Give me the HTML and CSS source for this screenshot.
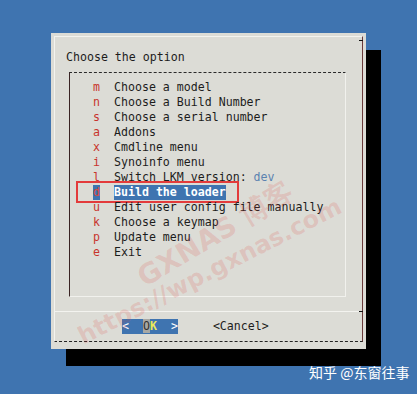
FILE: index.html
```html
<!DOCTYPE html>
<html>
<head>
<meta charset="utf-8">
<link rel="stylesheet" href="styles.css">
</head>
<body>
<div class="screen">
  <div class="dialog">
    <div class="frame">
      <div class="title">Choose the option</div>
      <div class="menu">
        <div class="row"><span class="key">m</span><span class="label">Choose a model</span></div>
        <div class="row"><span class="key">n</span><span class="label">Choose a Build Number</span></div>
        <div class="row"><span class="key">s</span><span class="label">Choose a serial number</span></div>
        <div class="row"><span class="key">a</span><span class="label">Addons</span></div>
        <div class="row"><span class="key">x</span><span class="label">Cmdline menu</span></div>
        <div class="row"><span class="key">i</span><span class="label">Synoinfo menu</span></div>
        <div class="row"><span class="key">l</span><span class="label">Switch LKM version: <span class="dev">dev</span></span></div>
        <div class="row selected"><span class="key">d</span><span class="label">Build the loader</span><span class="mark"></span></div>
        <div class="row"><span class="key">u</span><span class="label">Edit user config file manually</span></div>
        <div class="row"><span class="key">k</span><span class="label">Choose a keymap</span></div>
        <div class="row"><span class="key">p</span><span class="label">Update menu</span></div>
        <div class="row"><span class="key">e</span><span class="label">Exit</span></div>
      </div>
      <div class="sep"></div>
      <div class="buttons">
        <span class="btn active">&lt;  <span class="cur">O</span><span class="hot">K</span>  &gt;</span>
        <span class="btn">&lt;Cancel&gt;</span>
      </div>
    </div>
  </div>
  <div class="wm wm1">GXNAS 博客</div>
  <div class="wm wm2">https://wp.gxnas.com</div>
  <div class="credit">知乎 @东窗往事</div>
</div>
</body>
</html>
```
FILE: styles.css
```css
html, body {
  margin: 0;
  padding: 0;
}
body {
  background: #3f74b0;
  width: 417px;
  height: 394px;
  overflow: hidden;
}
.screen {
  position: relative;
  width: 417px;
  height: 394px;
  padding: 33px 0 0 51px;
  box-sizing: border-box;
}
.dialog {
  width: 315px;
  height: 316px;
  background: #dcdcd6;
  box-shadow: 15px 17px 0 #000;
  padding: 3px 3px 0 3px;
  box-sizing: border-box;
  font-family: "DejaVu Sans Mono", monospace;
  font-size: 11.6px;
  color: #1c1c1c;
}
.frame {
  height: 306px;
  box-sizing: border-box;
  border-top: 1px solid #f3f3ef;
  border-left: 1px solid #f3f3ef;
  border-right: 1px solid #6a3a3a;
  border-bottom: 1px dashed #222;
  padding: 13px 15px 0 11px;
  position: relative;
  display: flex;
  flex-direction: column;
}
.title {
  line-height: 15px;
  height: 15px;
  white-space: pre;
}
.menu {
  margin-top: 7px;
  margin-left: 3px;
  width: 277px;
  height: 225px;
  box-sizing: border-box;
  border-top: 1px dashed #2a2a2a;
  border-left: 1px solid #3a2424;
  border-right: 1px solid #f1f1ed;
  border-bottom: 1px solid #f1f1ed;
  padding: 7px 0 0 23px;
}
.row {
  display: flex;
  line-height: 15px;
  height: 15px;
  white-space: pre;
  position: relative;
}
.key {
  color: #c8342c;
  width: 7px;
  margin-right: 14px;
}
.dev {
  color: #5b82b0;
}
.selected .key {
  background: #3f74b0;
  color: #e0483a;
}
.selected .label {
  background: #3f74b0;
  color: #fff;
  font-weight: bold;
}
.mark {
  position: absolute;
  left: -17px;
  top: -4px;
  width: 159px;
  height: 18px;
  border: 2.5px solid #e33b3b;
}
.sep {
  margin: 14px -15px 0 -11px;
  height: 1px;
  background: #f3f3ef;
  position: relative;
}
.sep::after {
  content: "";
  position: absolute;
  right: -1px;
  top: 0;
  width: 4px;
  height: 1px;
  background: #111;
}
.frame::before {
  content: "";
  position: absolute;
  right: -1px;
  top: 3px;
  width: 4px;
  height: 1px;
  background: #111;
}
.buttons {
  margin-top: 7px;
  margin-left: 56px;
  line-height: 15px;
  height: 15px;
  white-space: pre;
  display: flex;
  gap: 35px;
}
.btn.active {
  background: #3f74b0;
  color: #fff;
}
.cur {
  background: #a8a8a4;
  color: #333;
}
.hot {
  color: #e8e85a;
  font-weight: bold;
}
.wm {
  position: absolute;
  font-family: "DejaVu Sans", sans-serif;
  font-weight: bold;
  color: rgba(225, 60, 60, 0.17);
  white-space: nowrap;
  transform-origin: left bottom;
  pointer-events: none;
}
.wm1 {
  left: 150px;
  top: 258px;
  font-size: 28px;
  transform: rotate(-31deg);
}
.wm2 {
  left: 86px;
  top: 322px;
  font-size: 24px;
  transform: rotate(-27deg);
}
.credit {
  position: absolute;
  left: 309px;
  top: 362px;
  font-family: "Noto Sans CJK SC", sans-serif;
  font-size: 14px;
  line-height: 20px;
  color: #fff;
}
```
